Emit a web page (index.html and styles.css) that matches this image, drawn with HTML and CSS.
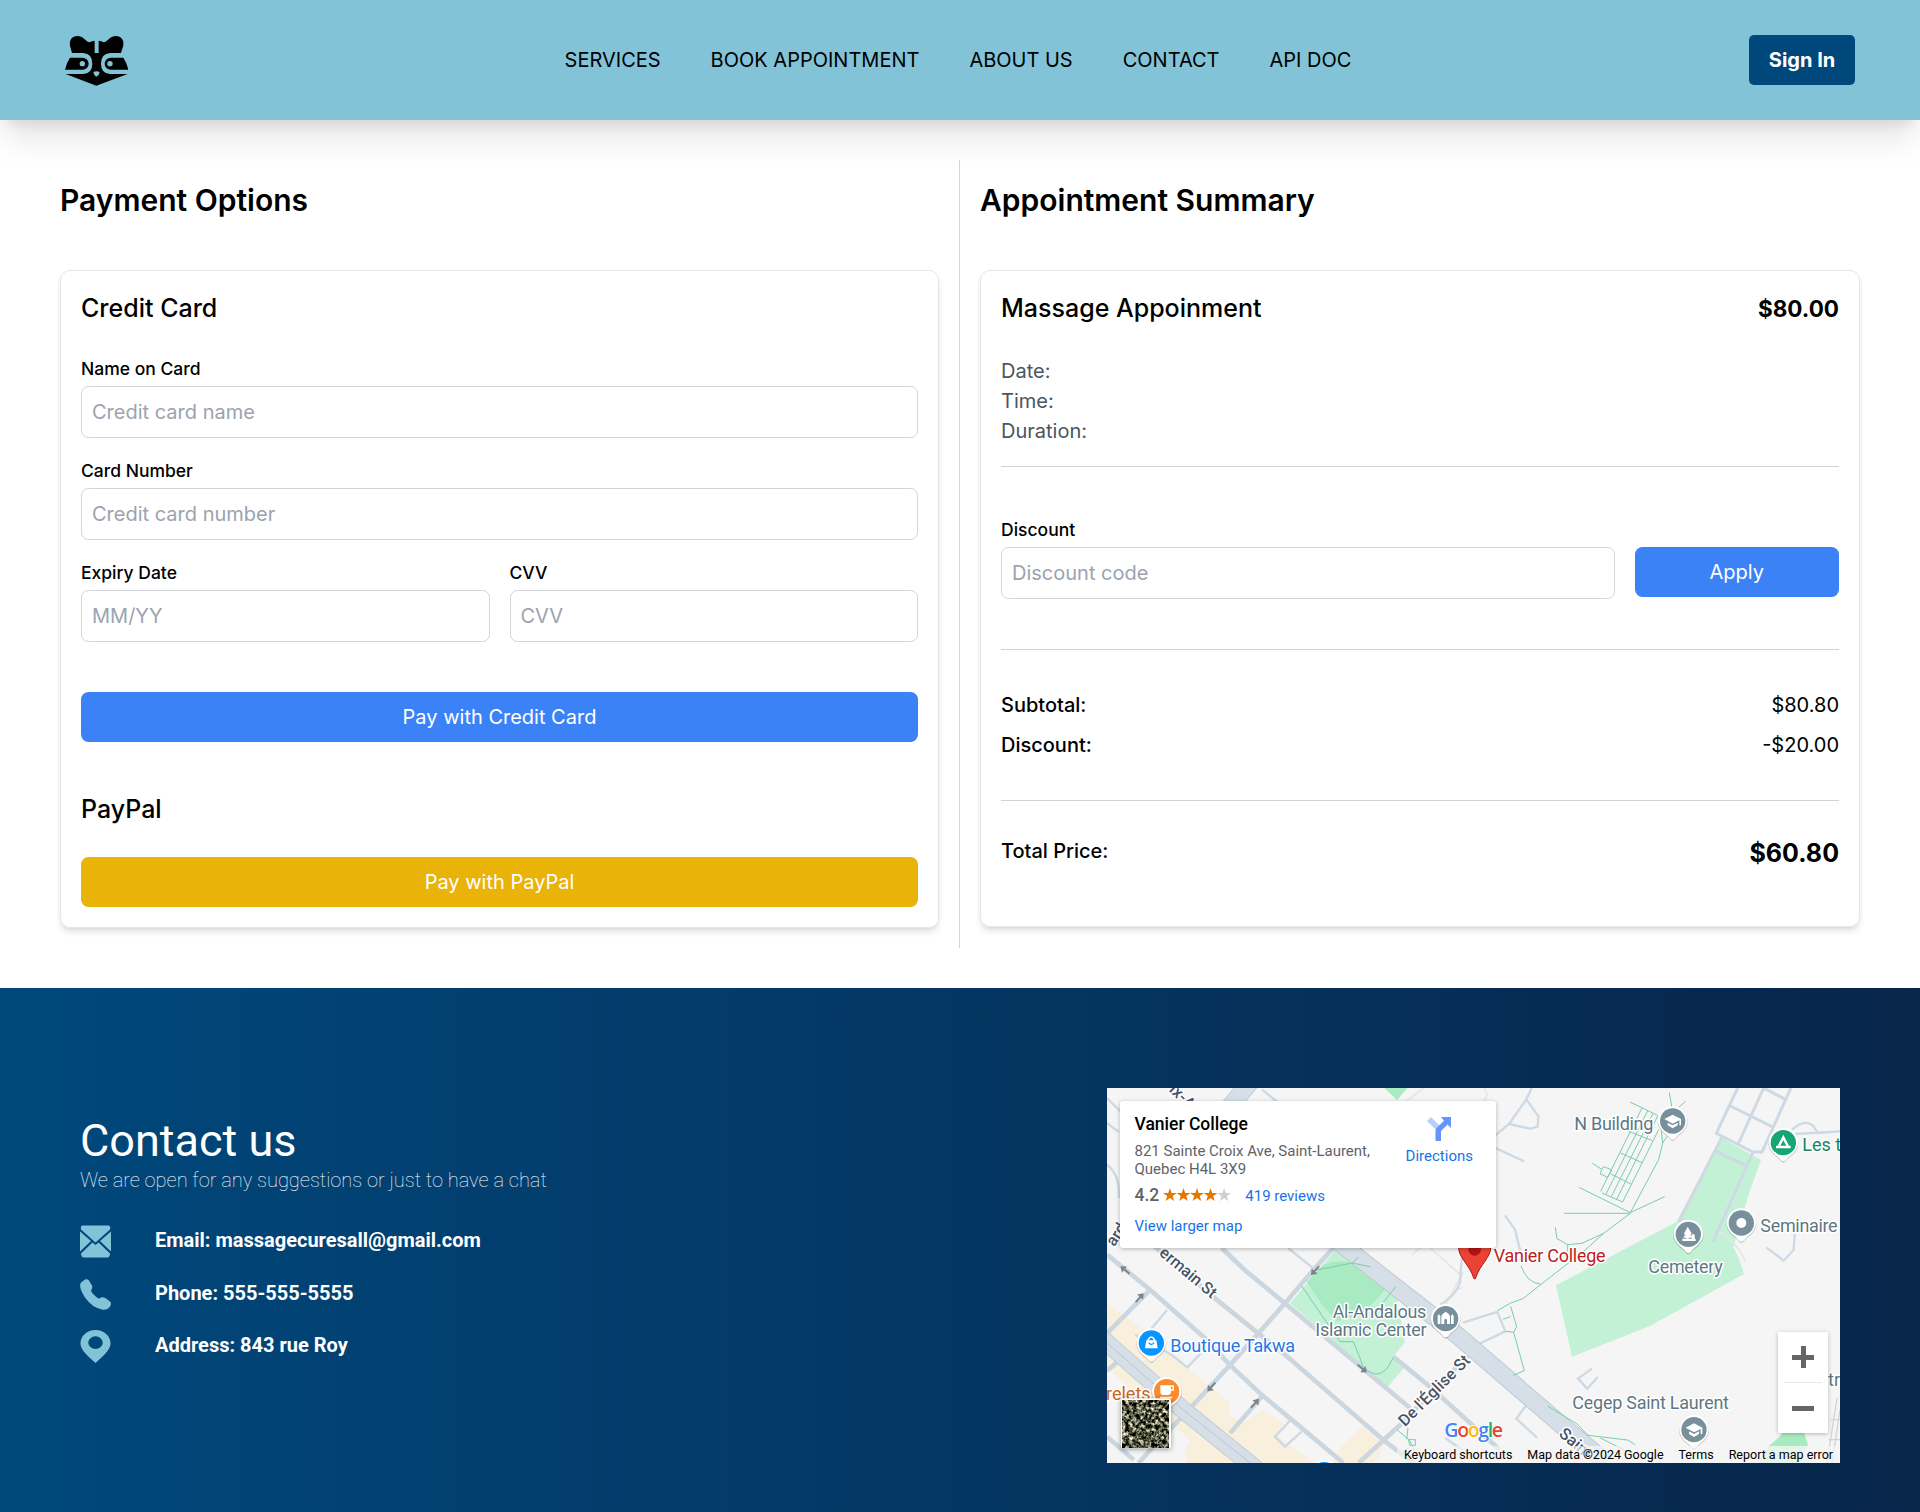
FILE: index.html
```html
<!DOCTYPE html>
<html lang="en">
<head>
<meta charset="utf-8">
<title>Payment</title>
<link rel="stylesheet" href="styles.css">
</head>
<body>
<header class="header">
  <svg class="logo" viewBox="45 40 190 156">
    <path d="M66 97L60 75C56 50 76 40 95 49C106 55 110 64 119 65Q126 61 134 60V97H146V60Q154 61 161 65C170 64 174 55 185 49C204 40 224 50 220 75L213 97H180Q153 99 153 129Q153 158 180 160H233L139 195L47 160H100Q127 158 127 129Q127 99 100 97Z"/>
    <path d="M60 111H98A18 18 0 0 1 98 147H45Q50 125 60 111ZM220 111H182A18 18 0 0 0 182 147H235Q230 125 220 111Z"/>
    <g class="logo-cut"><circle cx="97" cy="129" r="8"/><circle cx="180" cy="129" r="8"/><path d="M130 154Q139 149 149 154L146 163L139 168L133 163Z"/></g>
  </svg>
  <nav class="nav"><a>SERVICES</a><a>BOOK APPOINTMENT</a><a>ABOUT US</a><a>CONTACT</a><a>API DOC</a></nav>
  <button class="sign-in">Sign In</button>
</header>

<main class="main">
  <section class="column column-left">
    <h1 class="heading">Payment Options</h1>
    <form class="card">
      <h2 class="card-title">Credit Card</h2>
      <div class="fields">
        <label class="field"><span>Name on Card</span><input placeholder="Credit card name"></label>
        <label class="field"><span>Card Number</span><input placeholder="Credit card number"></label>
        <div class="field-pair">
          <label class="field"><span>Expiry Date</span><input placeholder="MM/YY"></label>
          <label class="field"><span>CVV</span><input placeholder="CVV"></label>
        </div>
      </div>
      <button type="button" class="button button-card">Pay with Credit Card</button>
      <h2 class="card-title">PayPal</h2>
      <button type="button" class="button button-paypal">Pay with PayPal</button>
    </form>
  </section>
  <section class="column">
    <h1 class="heading">Appointment Summary</h1>
    <div class="card card-summary">
      <div class="row"><h2 class="card-title">Massage Appoinment</h2><strong class="price">$80.00</strong></div>
      <div class="details"><p>Date:</p><p>Time:</p><p>Duration:</p></div>
      <div class="discount">
        <label class="field"><span>Discount</span><input placeholder="Discount code"></label>
        <button class="button">Apply</button>
      </div>
      <div class="totals">
        <div class="row"><b>Subtotal:</b><span>$80.80</span></div>
        <div class="row"><b>Discount:</b><span>-$20.00</span></div>
      </div>
      <div class="row total"><b>Total Price:</b><strong>$60.80</strong></div>
    </div>
  </section>
</main>

<footer class="footer">
  <div class="contact">
    <h2>Contact us</h2>
    <p class="tagline">We are open for any suggestions or just to have a chat</p>
    <ul class="contact-list">
      <li><svg viewBox="0 0 31 32"><path d="M3 0H28Q31 0 30 4L15.500 17L1 4Q0 0 3 0ZM0 6L11 15.500L0 26ZM31 6L20 15.500L31 26ZM1 28L12.500 17L15.500 19.500L18.500 17L30 28Q30 32 27 32H4Q1 32 1 28Z"/></svg><span>Email: massagecuresall@gmail.com</span></li>
      <li><svg viewBox="0 0 31 32"><path d="M1 4L5 1Q7 0 9 2L12 7Q13 9 11 12Q11 14 17 19Q19 21 21 19Q23 18 26 20L30 23Q32 25 30 28Q27 32 22 31Q12 29 5 19Q-2 8 1 4Z"/></svg><span>Phone: 555-555-5555</span></li>
      <li><svg viewBox="0 0 31 34"><path fill-rule="evenodd" d="M15.500 0C24 0 31 6 31 14C31 20 24 27 15.500 34C7 27 0 20 0 14C0 6 7 0 15.500 0ZM15.500 6.500A7.500 6.500 0 1 0 15.500 19.500A7.500 6.500 0 1 0 15.500 6.500Z"/></svg><span>Address: 843 rue Roy</span></li>
    </ul>
  </div>

  <div class="map">
    <svg class="map-canvas" viewBox="0 0 2199 1125" preserveAspectRatio="none">
      <defs>
        <g id="pin"><path class="pin-shadow" d="M-45 4A45 45 0 1 1 45 4C45 30 15 44 8 55Q0 65-8 55C-15 44-45 30-45 4Z"/><path fill="#fff" d="M-44 0A44 44 0 1 1 44 0C44 28 15 40 8 52Q0 60-8 52C-15 40-44 28-44 0Z"/><circle r="38"/></g>
        <path id="cap" fill="#fff" d="M-25-6L0-19L25-6V13H20V-2L0 8ZM-15 5L0 13L15 5V13L0 22L-15 13Z"/>
        <path id="arrow" fill="#7d858c" d="M-3 18V-2H-12L0-18L12-2H3V18Z"/>
        <filter id="aerial" x="0" y="0" width="1" height="1" color-interpolation-filters="sRGB"><feTurbulence type="fractalNoise" baseFrequency="0.09" numOctaves="4" seed="8"/><feColorMatrix values="2.2 .6 0 0 -1.06  2.1 .6 0 0 -1  2 .5 0 0 -.98  0 0 0 0 1"/></filter>
      </defs>
      <rect width="2199" height="1125" fill="#f5f5f5"/>
      <g fill="#f8f0dd">
        <path d="M0 645L100 716L290 880L370 946L364 981L409 1006L469 966L529 1006L509 1041L620 1125H240L232 1085L250 1056L0 840Z"/>
        <path d="M680 1125L695 1086L765 1016L830 1066L815 1106L795 1125Z"/>
      </g>
      <g fill="#c3f1d5">
        <path d="M549 646L690 480H720L864 596L894 761L859 806L894 836L841 898Z"/>
        <path d="M1844 149L1962 216L1929 306L1879 476L1894 506L1911 558L1629 714L1395 806L1347 592L1709 401Z"/>
        <path d="M1985 1075L2035 1036H2090L2103 1065L2080 1125H1950Z"/>
      </g>
      <g fill="#a8eac1"><path d="M599 581L650 530Q725 500 799 556L834 606L769 676L690 700L645 650Z"/><path d="M832 0H901L870 36Z"/><path d="M1985 1075L2035 1030H2090L2103 1075Z"/></g>
      <g class="road road-faint"><path d="M900 38L950 0M1130 0Q1150 20 1130 38M915 500L940 480M1040 610L1068 598M970 480L1060 560M1834 430Q1890 460 1915 520M1015 652L1068 552"/></g>
      <g class="road road-thin">
        <path d="M0 30L60 90M0 105L35 132M0 230Q40 260 35 330M465 5L515 45M1274 0L1258 34L1206 108L1165 142M1258 34L1294 84L1292 116L1270 122L1206 108M1165 180L1252 220M1194 382L1224 425L1240 490M1068 480L1060 560Q1065 610 1000 650M1068 704L1171 672L1195 730L1115 768M1455 842L1413 872L1441 902L1472 867M1256 954L1228 992L1290 1049M180 666L130 726M85 740L195 801L241 838L281 796M549 998L504 1046L534 1076L584 1031M543 480L629 549M1978 478L2030 518L2060 485L2063 438M1015 1050L1120 1125M2055 125Q2095 90 2120 115L2132 135L2199 130L2064 138"/>
      </g>
      <g class="road">
        <path d="M0 500L129 605L289 746L369 831L459 916L579 1016L709 1125M130 465L324 631L454 736L529 796L829 1056L920 1125M344 480L413 546L534 646L909 960M680 478L619 546L534 646L454 736L369 831L254 956L139 1076L95 1125M0 736L124 611M369 1036L464 926M755 1125L879 1011L1089 796M0 848L44 811M0 1046L80 1115M859 806L969 896L1179 1086"/>
      </g>
      <g class="road road-grid"><path d="M1892 0L1828 136L1938 192L1965 192L2052 0M1970 0L1895 165M1870 54L1995 116M1970 0L2035 34M1844 149L1715 401M1828 190L1920 235M1938 192L1818 462"/></g>
      <g class="road avenue-edge"><path d="M685 454L844 580L1044 736L1369 1016L1500 1125M-20 747L229 966L450 1145M365 60L440 -30"/></g>
      <g class="road avenue"><path d="M685 454L844 580L1044 736L1369 1016L1500 1125M-20 747L229 966L450 1145M365 60L440 -30"/></g>
      <path class="median" d="M0 765L229 966L430 1125"/>
      <g class="path">
        <path d="M584 594L699 761H739L769 836Q810 880 844 836L859 808M866 596L819 656M629 546L735 525L790 536M735 525L755 508"/>
        <path d="M1687 14L1695 60M1736 40L1715 58M1569 42L1652 82M1605 60L1481 310M1622 68L1497 318M1638 76L1513 326M1652 84L1529 334M1655 125L1547 342L1485 315M1560 128L1636 158M1541 195L1605 224M1512 258L1572 288M1456 226L1484 244M1484 244L1490 236L1515 246L1502 268L1480 258ZM1416 298L1570 374L1673 326M1372 376H1570L1490 436L1425 466L1382 470L1350 452L1345 418M1570 374L1655 215L1667 165L1663 130M1680 145L1667 165M1382 470V500M1490 436L1430 490L1316 578L1248 632L1211 645L1171 668M1242 534Q1260 585 1300 588M1211 655L1229 716L1220 733L1252 848L1218 862M1195 730L1220 733M1188 694L1210 686M1322 954L1410 1008L1443 1042L1562 1056L1584 1070M1480 1050L1560 1090M870 1025L905 1055L915 1070M903 1020L899 1054M905 1055H925V1072H908ZM916 1072L930 1110M905 1080L880 1100"/>
      </g>
      <path class="rail" d="M2190 930L2160 1125M2199 965L2175 1125M2172 995H2199M2165 1055H2199"/>
      <use href="#arrow" transform="translate(54 546) rotate(-50)"/><use href="#arrow" transform="translate(624 548) rotate(222)"/><use href="#arrow" transform="translate(98 629) rotate(42)"/><use href="#arrow" transform="translate(313 897) rotate(222)"/><use href="#arrow" transform="translate(444 946) rotate(42)"/><use href="#arrow" transform="translate(766 842) rotate(130)"/>
      <g class="street">
        <text transform="translate(184 8) rotate(44)">ix-Av</text>
        <text transform="translate(22 478) rotate(-57)">ard</text>
        <text transform="translate(154 499) rotate(40)" textLength="208">ermain St</text>
        <text transform="translate(894 1018) rotate(-45)" textLength="280">De l'Église St</text>
        <text transform="translate(1353 1042) rotate(40)">Saint</text>
      </g>
      <g class="place">
        <text x="1402" y="125" textLength="237">N Building</text><text x="1960" y="431" textLength="232">Seminaire</text><text x="1624" y="554" textLength="223">Cemetery</text>
        <text x="677" y="691" textLength="281">Al-Andalous</text><text x="625" y="744" textLength="334">Islamic Center</text><text x="1396" y="962" textLength="470">Cegep Saint Laurent</text><text x="2163" y="895">tre</text>
        <text class="green" x="2086" y="190">Les t</text><text class="blue" x="190" y="791" textLength="374">Boutique Takwa</text><text class="orange" x="-3" y="936">relets</text><text class="red" x="1160" y="522" textLength="336">Vanier College</text>
      </g>
      <g fill="#78909c">
        <use href="#pin" x="1697" y="99"/><use href="#cap" x="1697" y="99"/>
        <use href="#pin" x="1903" y="405"/><circle cx="1903" cy="405" r="15" fill="#fff"/>
        <use href="#pin" x="1744" y="439"/><path fill="#fff" d="M1742 416L1755 439H1750L1756 449H1745V452H1754V441Q1760 435 1763 442V452H1766V459H1726V452H1738V449H1729L1735 439H1730Z"/>
        <use href="#pin" x="1016" y="692"/><path fill="#fff" d="M992 708V683L996 679L1000 683V708ZM1003 708V685Q1005 677 1016 671Q1027 677 1029 685V708H1020V696Q1016 688 1012 696V708ZM1032 708V683L1036 679L1040 683V708Z"/>
        <use href="#pin" x="1761" y="1025"/><use href="#cap" x="1761" y="1025"/>
      </g>
      <g fill="#16a673"><use href="#pin" x="2029" y="164"/><path fill="#fff" fill-rule="evenodd" d="M2029 140L2046 173H2051V181H2007V173H2012ZM2029 157L2020 173H2038Z"/></g>
      <g fill="#0895ff"><use href="#pin" x="133" y="765"/><path fill="none" stroke="#fff" stroke-width="5" d="M124 760V754Q133 740 142 754V760"/><path fill="#fff" d="M118 757H148L152 781H114Z"/><path fill="none" stroke="#0895ff" stroke-width="4" d="M125 764Q133 775 141 764"/><use href="#pin" x="652" y="1160"/></g>
      <g fill="#fb8b2c"><use href="#pin" x="179" y="911"/><path fill="#fff" fill-rule="evenodd" d="M160 892H201V908H192V914Q190 921 182 921H170Q160 921 160 911ZM192 896H197V904H192ZM159 926H196V931H159Z"/></g>
      <path fill="#ea4335" stroke="#b31412" stroke-width="3" d="M1055 475H1151C1154 507 1118 530 1106 570Q1103 577 1100 570C1088 530 1052 507 1055 475Z"/><circle cx="1103" cy="484" r="19" fill="#b31412"/>
      <text class="google" x="1012" y="1046" textLength="176"><tspan fill="#4285f4">G</tspan><tspan fill="#ea4335">o</tspan><tspan fill="#fbbc05">o</tspan><tspan fill="#4285f4">g</tspan><tspan fill="#34a853">l</tspan><tspan fill="#ea4335">e</tspan></text>
      <rect class="thumb-shadow" x="42" y="931" width="150" height="150" rx="6" fill="#fff"/><rect x="46" y="936" width="140" height="142" filter="url(#aerial)"/>
    </svg>

    <div class="map-card">
      <div class="place-info">
        <h3>Vanier College</h3>
        <p>821 Sainte Croix Ave, Saint-Laurent,<br>Quebec H4L 3X9</p>
        <div class="rating"><b>4.2</b>
          <svg viewBox="0 0 70 14"><defs><path id="star" d="M7 0L8.700 4.900H14L9.800 8L11.300 13L7 10L2.700 13L4.200 8L0 4.900H5.300Z"/></defs><g fill="#e77600"><use href="#star"/><use href="#star" x="13.800"/><use href="#star" x="27.500"/><use href="#star" x="41.200"/></g><use href="#star" x="55" fill="#d0d0d0"/></svg>
          <a>419 reviews</a></div>
        <a class="larger">View larger map</a>
      </div>
      <div class="directions"><svg viewBox="0 0 24 24"><path fill="#b8cffc" d="M0 4L4 0L14 10L10 14Z"/><path fill="#6495fb" d="M14 0H24V11L20.500 7.500L14 14V24H8.500V14Q8.500 12 10 10.500L17 3.800Z"/></svg><a>Directions</a></div>
    </div>
    <div class="zoom"><button class="plus" aria-label="Zoom in"></button><button class="minus" aria-label="Zoom out"></button></div>
    <div class="legal"><span>Keyboard shortcuts</span><span>Map data ©2024 Google</span><span>Terms</span><span>Report a map error</span></div>
  </div>
</footer>
</body>
</html>
```
FILE: styles.css
```css
* { box-sizing: border-box; margin: 0; padding: 0; }
html { font-size: 20px; }
body { font: 1rem/1.5 Inter, "Liberation Sans", sans-serif; color: #000; background: #fff; }
button, input { font: inherit; border: 0; }
h1, h2, h3, b { font-weight: 500; }

.header { position: relative; height: 120px; padding: 0 65px; display: grid; grid-template-columns: 1fr auto 1fr; align-items: center; background: #82c3d7; box-shadow: 0 25px 31px -6px rgba(0,0,0,.1), 0 10px 12.5px -7.5px rgba(0,0,0,.1); }
.logo { width: 63.3px; height: 52px; }
.logo-cut { fill: #82c3d7; }
.nav { display: flex; gap: 50px; padding-right: 4px; }
.sign-in { justify-self: end; width: 106px; height: 50px; border-radius: 5px; background: #00487c; color: #fff; font-weight: 700; }

.main { display: grid; grid-template-columns: 1fr 1fr; padding: 40px; }
.column { padding: 20px; }
.column-left { border-right: 1px solid #d1d5db; }
.heading { font-size: 30px; line-height: 40px; font-weight: 600; margin-bottom: 50px; }
.card { border: 1px solid #e5e7eb; border-radius: 10px; padding: 20px; box-shadow: 0 5px 7.5px -1.25px rgba(0,0,0,.1), 0 2.5px 5px -2.5px rgba(0,0,0,.1); }
.card-summary { height: 657px; }
.card-title { font-size: 25px; line-height: 35px; }
.fields { display: grid; gap: 20px; margin: 30px 0 50px; }
.field-pair { display: grid; grid-template-columns: 1fr 1fr; gap: 20px; }
.field { display: grid; gap: 5px; }
.field span { font-size: 17.5px; line-height: 25px; font-weight: 500; }
.field input { width: 100%; height: 52px; padding: 10px; border: 1px solid #d1d5db; border-radius: 7.5px; }
.field input::placeholder { color: #9ca3af; opacity: 1; }
.button { display: block; width: 100%; height: 50px; border-radius: 7.5px; background: #3b82f6; color: #fff; }
.button-card { margin-bottom: 50px; }
.button-paypal { margin-top: 30px; background: #eab308; }
.row { display: flex; justify-content: space-between; }
.price { font-size: 22.5px; line-height: 35px; }
.details { color: #4b5563; padding: 30px 0 20px; border-bottom: 1px solid #d1d5db; }
.discount { display: grid; grid-template-columns: 3fr 1fr; gap: 20px; padding: 50px 0; border-bottom: 1px solid #d1d5db; }
.discount .button { margin-top: 30px; }
.totals { display: grid; gap: 10px; padding: 40px 0; border-bottom: 1px solid #d1d5db; }
.total { padding-top: 35px; }
.total strong { font-size: 25px; line-height: 35px; }

.footer { display: flex; justify-content: space-between; height: 524px; padding: 100px 80px 49px; background: linear-gradient(to right, #00487c, #08254a); color: #fff; font-family: Roboto, sans-serif; }
.contact { padding-top: 28px; }
.contact h2 { font-size: 45px; line-height: 50px; font-weight: 400; }
.tagline { font-weight: 100; line-height: 30px; margin-top: -1px; }
.contact-list { list-style: none; display: grid; gap: 20px; margin-top: 30px; }
.contact-list li { display: flex; gap: 44px; height: 32.500px; font-weight: 700; line-height: 30px; }
.contact-list svg { width: 31px; height: 33px; fill: #82c3d7; }

.map { position: relative; width: 733px; height: 375px; overflow: hidden; }
.map-canvas { display: block; width: 100%; height: 100%; font-family: Roboto, sans-serif; }
.road { fill: none; stroke: #cbd6df; stroke-width: 14; }
.road-thin { stroke: #ced9e4; stroke-width: 7; }
.road-grid { stroke: #ced9e4; stroke-width: 9; }
.road-faint { stroke: #e5e6e9; stroke-width: 5; }
.avenue-edge { stroke: #bcc8d1; stroke-width: 54; }
.avenue { stroke: #d6dfe7; stroke-width: 49; }
.median { fill: none; stroke: #bac6cf; stroke-width: 3; }
.path { fill: none; stroke: #79cdaa; stroke-width: 3; }
.rail { fill: none; stroke: #d0d2d4; stroke-width: 4; }
.street, .place { font-size: 54px; paint-order: stroke; stroke: #fff; stroke-width: 9; stroke-linejoin: round; }
.street { font-size: 49px; font-weight: 500; fill: #475367; }
.place { fill: #5d7783; }
.green { fill: #148560; }
.blue { fill: #2577e8; }
.orange { fill: #c8671a; }
.red { fill: #bd1c1c; }
.google { font: 600 59px "Open Sans", sans-serif; stroke: #fff; stroke-width: 5; paint-order: stroke; }
.pin-shadow { fill: #0003; }
.thumb-shadow { filter: drop-shadow(0 3px 8px #0006); }
.map-card { position: absolute; left: 13px; top: 13px; width: 376px; height: 147px; padding: 11px 23px 0 14.5px; display: flex; justify-content: space-between; background: #fff; border-radius: 3px; box-shadow: 0 1px 4px #0004; font-size: 15px; line-height: 18px; color: #5f6368; }
.map-card a { color: #1a73e8; }
.map-card h3 { font-size: 17.5px; line-height: 25px; color: #000; }
.place-info p { margin-top: 5px; }
.rating { display: flex; align-items: center; margin-top: 6px; height: 22px; }
.rating a { padding-top: 2px; }
.rating b { font-size: 17.5px; }
.rating svg { width: 69px; height: 14px; margin: 0 13px 0 4px; }
.larger { display: block; margin-top: 11px; }
.directions { display: flex; flex-direction: column; align-items: center; gap: 6px; padding-top: 5px; }
.directions svg { width: 24px; height: 24px; }
.zoom { position: absolute; left: 671px; top: 244px; width: 50px; height: 101px; background: #fff; box-shadow: 0 1px 4px #0004; }
.zoom button { display: block; width: 38px; height: 51px; margin: 0 6px; background: linear-gradient(#666,#666) center / 22px 5px no-repeat; }
.zoom .plus { border-bottom: 1px solid #e6e6e6; background: linear-gradient(#666,#666) center / 22px 5px no-repeat, linear-gradient(#666,#666) center / 5px 22px no-repeat; }
.legal { position: absolute; right: 0; bottom: 0; display: flex; gap: 15px; height: 17px; padding: 0 7px; background: #f5f5f5b3; color: #000; font-size: 12.5px; line-height: 17px; }
```
